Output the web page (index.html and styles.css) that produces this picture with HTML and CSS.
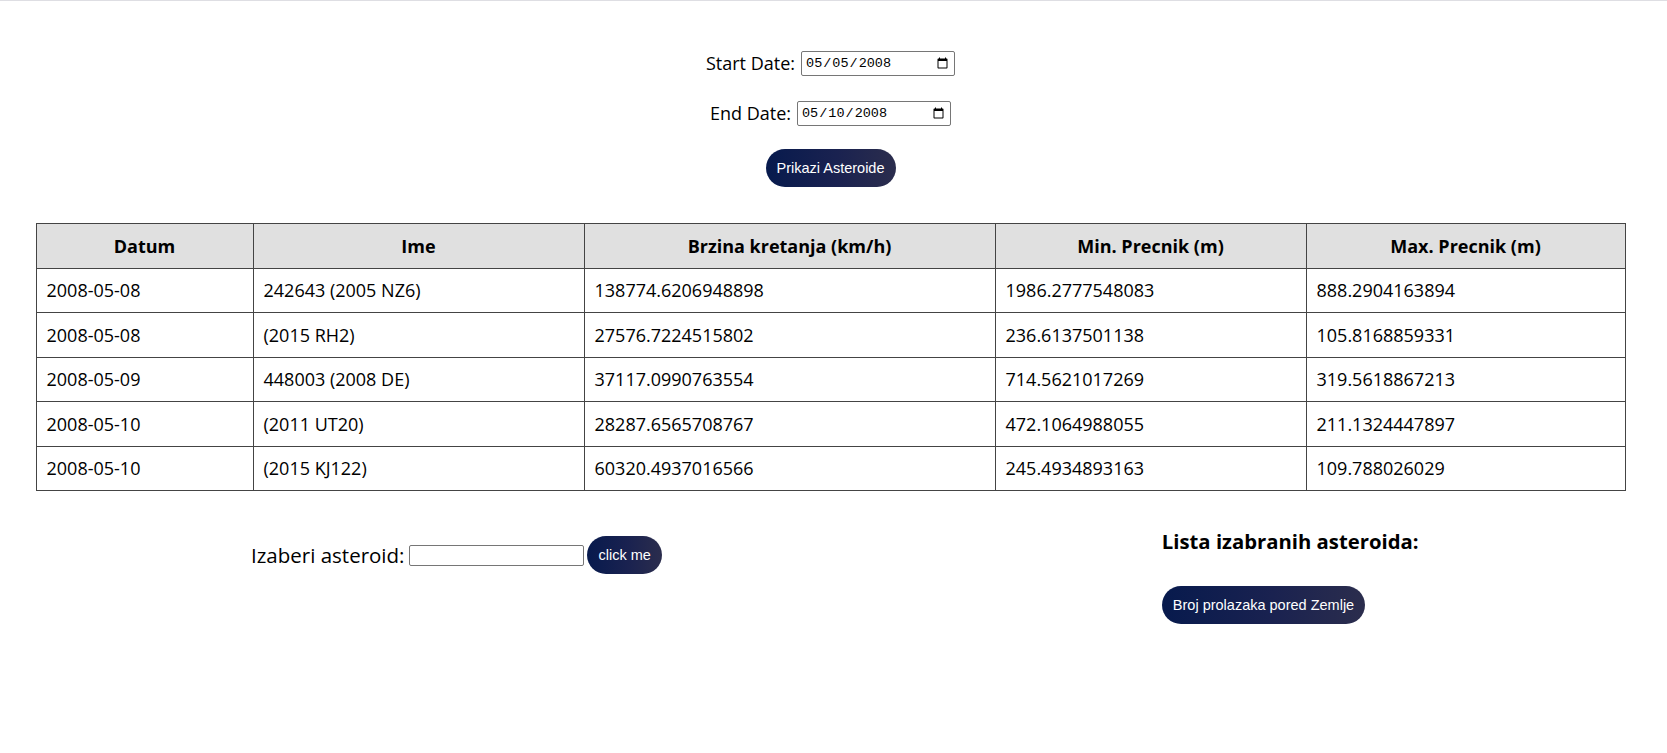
FILE: index.html
```html
<!DOCTYPE html>
<html lang="sr">
<head>
<meta charset="utf-8">
<title>Asteroidi</title>
<link rel="stylesheet" href="styles.css">
</head>
<body>
<div class="page">
  <div class="form">
    <div class="date-row">
      <label class="field-label" for="start">Start Date:</label>
      <input class="date-input" type="date" id="start" value="2008-05-05">
    </div>
    <div class="date-row">
      <label class="field-label" for="end">End Date:</label>
      <input class="date-input" type="date" id="end" value="2008-05-10">
    </div>
    <button class="pill-btn">Prikazi Asteroide</button>
  </div>

  <table class="asteroids">
    <colgroup>
      <col class="c-date">
      <col class="c-name">
      <col class="c-speed">
      <col class="c-min">
      <col class="c-max">
    </colgroup>
    <thead>
      <tr>
        <th>Datum</th>
        <th>Ime</th>
        <th>Brzina kretanja (km/h)</th>
        <th>Min. Precnik (m)</th>
        <th>Max. Precnik (m)</th>
      </tr>
    </thead>
    <tbody>
      <tr><td>2008-05-08</td><td>242643 (2005 NZ6)</td><td>138774.6206948898</td><td>1986.2777548083</td><td>888.2904163894</td></tr>
      <tr><td>2008-05-08</td><td>(2015 RH2)</td><td>27576.7224515802</td><td>236.6137501138</td><td>105.8168859331</td></tr>
      <tr><td>2008-05-09</td><td>448003 (2008 DE)</td><td>37117.0990763554</td><td>714.5621017269</td><td>319.5618867213</td></tr>
      <tr><td>2008-05-10</td><td>(2011 UT20)</td><td>28287.6565708767</td><td>472.1064988055</td><td>211.1324447897</td></tr>
      <tr><td>2008-05-10</td><td>(2015 KJ122)</td><td>60320.4937016566</td><td>245.4934893163</td><td>109.788026029</td></tr>
    </tbody>
  </table>

  <div class="bottom">
    <div class="picker">
      <label class="picker-label" for="pick">Izaberi asteroid:</label>
      <input class="text-input" type="text" id="pick">
      <button class="pill-btn">click me</button>
    </div>
    <div class="selected">
      <h3 class="selected-title">Lista izabranih asteroida:</h3>
      <button class="pill-btn">Broj prolazaka pored Zemlje</button>
    </div>
  </div>
</div>
</body>
</html>
```

FILE: styles.css
```css
html, body {
  margin: 0;
  padding: 0;
  background: #ffffff;
}

body {
  font-family: "Open Sans", "Noto Sans", sans-serif;
  color: #000;
  border-top: 1px solid #dedee3;
}

.page {
  padding: 50px 14px 40px 8px;
}

.form {
  display: flex;
  flex-direction: column;
  align-items: center;
}

.date-row {
  display: flex;
  align-items: center;
  justify-content: center;
  gap: 6px;
  height: 25px;
  margin-bottom: 25px;
}

.date-row + .date-row {
  margin-bottom: 23px;
}

.field-label {
  font-size: 18px;
  line-height: 25px;
}

.picker-label {
  font-size: 20.5px;
  line-height: 26px;
}

.date-input {
  box-sizing: border-box;
  width: 154px;
  height: 25px;
  padding: 1px 3px;
  border: 1px solid #767676;
  border-radius: 2px;
  font-family: "Liberation Mono", "DejaVu Sans Mono", monospace;
  font-size: 13.5px;
  color: #000;
  background: #fff;
}

.pill-btn {
  height: 38px;
  padding: 0 11px;
  border: none;
  border-radius: 19px;
  background: linear-gradient(90deg, #071a4d 0%, #1a2250 55%, #2b2d4d 100%);
  color: #fff;
  font-family: "Liberation Sans", Arial, sans-serif;
  font-size: 14.5px;
  cursor: pointer;
  white-space: nowrap;
}

.asteroids {
  width: 1589px;
  margin: 36px auto 0;
  border-collapse: collapse;
  table-layout: fixed;
  font-size: 18px;
}

.c-date { width: 217px; }
.c-name { width: 331px; }
.c-speed { width: 411px; }
.c-min { width: 311px; }
.c-max { width: 319px; }

.asteroids th,
.asteroids td {
  border: 1px solid #444;
  padding: 9.75px 10px;
  line-height: 24px;
  white-space: nowrap;
}

.asteroids th {
  background: #e0e0e0;
  font-weight: 700;
  text-align: center;
}

.asteroids td {
  text-align: left;
}

.bottom {
  display: flex;
  align-items: flex-start;
  margin-top: 31px;
  padding-left: 243px;
}

.picker {
  display: flex;
  align-items: center;
  gap: 5px;
  margin-top: 14px;
}

.picker .pill-btn {
  margin-left: -2px;
}

.text-input {
  box-sizing: border-box;
  width: 175px;
  height: 21px;
  border: 1px solid #767676;
  border-radius: 2px;
  padding: 1px 2px;
}

.selected {
  margin-left: 500px;
  display: flex;
  flex-direction: column;
  align-items: flex-start;
}

.selected-title {
  margin: 7px 0 33px;
  font-size: 20.3px;
  line-height: 24px;
  font-weight: 700;
}
```
